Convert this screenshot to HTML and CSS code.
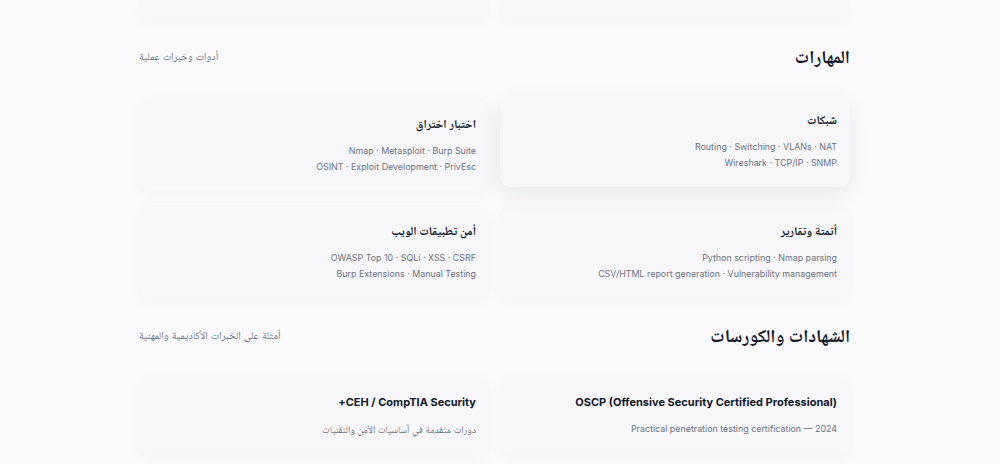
FILE: index.html
```html
<!DOCTYPE html>
<html lang="ar" dir="rtl">
<head>
<meta charset="utf-8">
<title>المهارات والشهادات</title>
<link rel="stylesheet" href="styles.css">
</head>
<body>
<main class="page">
  <div class="grid grid-top">
    <div class="card card-stub"></div>
    <div class="card card-stub"></div>
  </div>

  <section class="section">
    <header class="section-head">
      <h2 class="section-title">المهارات</h2>
      <p class="section-sub">أدوات وخبرات عملية</p>
    </header>
    <div class="grid">
      <article class="card card-raised">
        <h3 class="card-title">شبكات</h3>
        <p class="card-line">Routing · Switching · VLANs · NAT</p>
        <p class="card-line">Wireshark · TCP/IP · SNMP</p>
      </article>
      <article class="card">
        <h3 class="card-title">اختبار اختراق</h3>
        <p class="card-line">Nmap · Metasploit · Burp Suite</p>
        <p class="card-line">OSINT · Exploit Development · PrivEsc</p>
      </article>
      <article class="card">
        <h3 class="card-title">أتمتة وتقارير</h3>
        <p class="card-line">Python scripting · Nmap parsing</p>
        <p class="card-line">CSV/HTML report generation · Vulnerability management</p>
      </article>
      <article class="card">
        <h3 class="card-title">أمن تطبيقات الويب</h3>
        <p class="card-line">OWASP Top 10 · SQLi · XSS · CSRF</p>
        <p class="card-line">Burp Extensions · Manual Testing</p>
      </article>
    </div>
  </section>

  <section class="section section-certs">
    <header class="section-head">
      <h2 class="section-title">الشهادات والكورسات</h2>
      <p class="section-sub">أمثلة على الخبرات الأكاديمية والمهنية</p>
    </header>
    <div class="grid">
      <article class="card">
        <h3 class="card-title card-title-en">OSCP (Offensive Security Certified Professional)</h3>
        <p class="card-desc">Practical penetration testing certification — 2024</p>
      </article>
      <article class="card">
        <h3 class="card-title card-title-en">CEH / CompTIA Security+</h3>
        <p class="card-desc card-desc-ar">دورات متقدمة في أساسيات الأمن والتقنيات</p>
      </article>
    </div>
  </section>
</main>
</body>
</html>
```

FILE: styles.css
```css
* { box-sizing: border-box; }

html, body {
  margin: 0;
  padding: 0;
  background: #fafafc;
}

body {
  font-family: Inter, "Noto Naskh Arabic", sans-serif;
  color: #111827;
}

.page {
  padding: 0 150px 40px 139px;
}

.grid {
  display: grid;
  grid-template-columns: 1fr 1fr;
  column-gap: 11px;
  row-gap: 14px;
}

.grid-top .card-stub {
  height: 18px;
  border-radius: 0 0 10px 10px;
  padding: 0;
}

.card {
  background: #f7f7fa;
  border-radius: 10px;
  padding: 16px 13px;
  box-shadow: 0 4px 14px rgba(20, 24, 40, 0.035);
}

.card-raised {
  transform: translateY(-4px);
  box-shadow: 0 8px 22px rgba(20, 24, 40, 0.075);
}

.section {
  margin-top: 25px;
}

.section-certs {
  margin-top: 24px;
}

.section-head {
  display: flex;
  justify-content: space-between;
  align-items: center;
  margin-bottom: 27px;
}

.section-certs .section-head {
  margin-bottom: 26px;
}

.section-title {
  margin: 0;
  font-family: Inter, "Noto Naskh Arabic", serif;
  font-size: 18px;
  font-weight: 700;
  line-height: 28px;
  color: #111827;
}

.section-sub {
  margin: 0;
  font-family: Inter, "Noto Naskh Arabic", serif;
  font-size: 10.6px;
  line-height: 16px;
  color: #6b7280;
}

.card-title {
  margin: 0 0 9px;
  font-family: Inter, "Noto Naskh Arabic", serif;
  font-size: 11.8px;
  line-height: 20px;
  font-weight: 700;
  color: #111827;
}

.card-title-en {
  font-size: 11px;
  margin-bottom: 9px;
}

.card-line {
  margin: 0;
  font-size: 8.9px;
  line-height: 16px;
  color: #6b7280;
}

.card-desc {
  margin: 0;
  font-family: Inter, "Noto Naskh Arabic", serif;
  font-size: 8.9px;
  line-height: 16px;
  color: #6b7280;
}

.card-desc-ar {
  font-size: 9.8px;
  line-height: 17px;
}
```
